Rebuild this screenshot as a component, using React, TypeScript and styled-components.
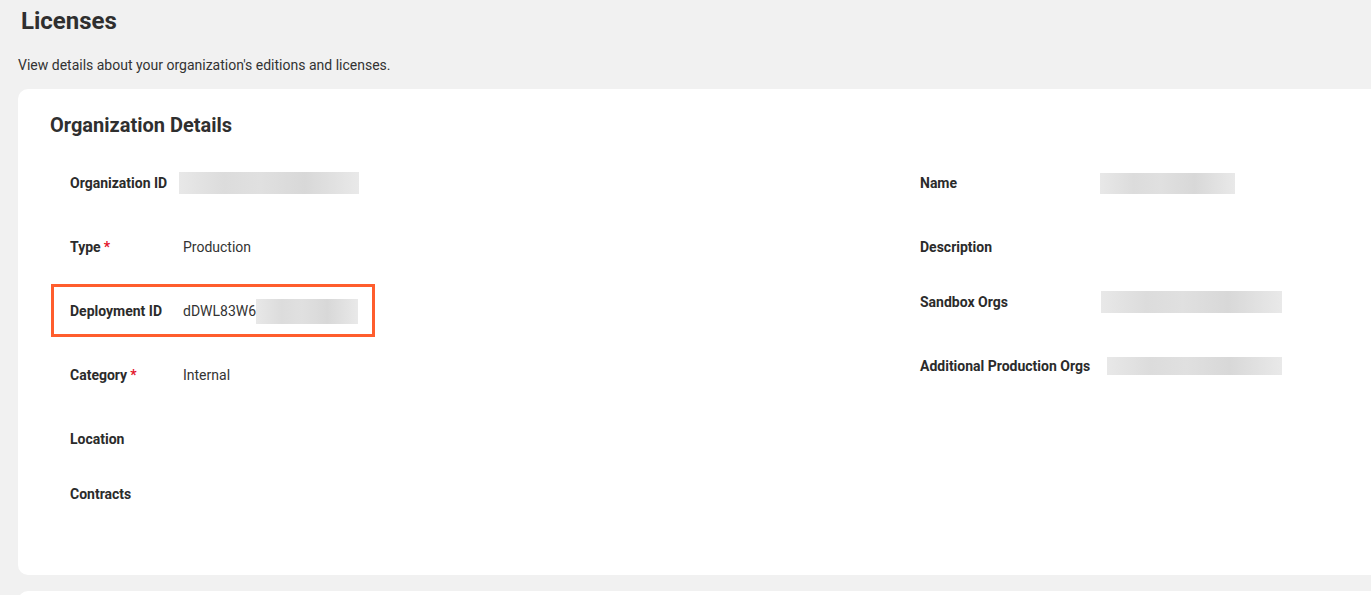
import { FC } from "react";
import styled, { createGlobalStyle } from "styled-components";

const GlobalStyle = createGlobalStyle`
	html, body {
		margin: 0;
		padding: 0;
		background: #f1f1f1;
		overflow: hidden;
	}
	body {
		font-family: Roboto, "Liberation Sans", Arial, sans-serif;
		color: #333;
	}
`;

const Page = styled.div`
	padding: 0 0 0 18px;
	width: 1371px;
	box-sizing: border-box;
`;

const Title = styled.h1`
	margin: 0 0 0 3px;
	font-size: 24px;
	line-height: 42px;
	font-weight: 700;
	color: #2f2f2f;
`;

const Subtitle = styled.p`
	margin: 14px 0 0;
	font-size: 14px;
	line-height: 18px;
	color: #333;
`;

const Card = styled.section<{ $tall?: number }>`
	margin: 15px -30px 0 0;
	background: #fff;
	border-radius: 10px;
	padding: 20px 0 65px 32px;
	min-height: ${(p) => p.$tall ?? 0}px;
	box-sizing: border-box;

	& + & {
		margin-top: 16px;
	}
`;

const CardTitle = styled.h2`
	margin: 0 0 26px;
	font-size: 20px;
	line-height: 32px;
	font-weight: 700;
	color: #2f2f2f;
`;

const Columns = styled.div`
	display: grid;
	grid-template-columns: 850px 1fr;
	padding-left: 20px;
`;

const Column = styled.div`
	display: flex;
	flex-direction: column;
`;

const Row = styled.div<{ $pitch?: number }>`
	position: relative;
	display: flex;
	align-items: center;
	height: 32px;
	margin-bottom: ${(p) => (p.$pitch ?? 32) - 32}px;
`;

const Label = styled.div<{ $width: number }>`
	width: ${(p) => p.$width}px;
	flex-shrink: 0;
	font-size: 14px;
	line-height: 20px;
	font-weight: 700;
	color: #2b2b2b;
`;

const Required = styled.span`
	color: #e3132b;
	margin-left: 3px;
`;

const Value = styled.div`
	display: flex;
	align-items: center;
	height: 32px;
	font-size: 14px;
	color: #333;
`;

const Redacted = styled.span<{ $w: number; $h: number; $shift?: number }>`
	display: inline-block;
	width: ${(p) => p.$w}px;
	height: ${(p) => p.$h}px;
	margin-left: ${(p) => p.$shift ?? 0}px;
	background: linear-gradient(
		90deg,
		#e8e8e8 0%,
		#dcdcdc 25%,
		#e0e0e0 45%,
		#d8d8d8 70%,
		#e9e9e9 100%
	);
`;

const Highlight = styled.div`
	position: absolute;
	left: -19px;
	top: -11px;
	width: 324px;
	height: 53px;
	border: 3px solid #ff5d2d;
	box-sizing: border-box;
	pointer-events: none;
`;

const LEFT = 113;
const RIGHT = 180;

const App: FC = () => {
	return (
		<>
			<GlobalStyle />
			<Page>
				<Title>Licenses</Title>
				<Subtitle>View details about your organization's editions and licenses.</Subtitle>
				<Card>
					<CardTitle>Organization Details</CardTitle>
					<Columns>
						<Column>
							<Row $pitch={64}>
								<Label $width={LEFT}>Organization ID</Label>
								<Value>
									<Redacted $w={180} $h={22} $shift={-4} />
								</Value>
							</Row>
							<Row $pitch={64}>
								<Label $width={LEFT}>
									Type<Required>*</Required>
								</Label>
								<Value>Production</Value>
							</Row>
							<Row $pitch={64}>
								<Highlight />
								<Label $width={LEFT}>Deployment ID</Label>
								<Value>
									dDWL83W6
									<Redacted $w={102} $h={25} />
								</Value>
							</Row>
							<Row $pitch={64}>
								<Label $width={LEFT}>
									Category<Required>*</Required>
								</Label>
								<Value>Internal</Value>
							</Row>
							<Row $pitch={55}>
								<Label $width={LEFT}>Location</Label>
							</Row>
							<Row>
								<Label $width={LEFT}>Contracts</Label>
							</Row>
						</Column>
						<Column>
							<Row $pitch={64}>
								<Label $width={RIGHT}>Name</Label>
								<Value>
									<Redacted $w={135} $h={21} />
								</Value>
							</Row>
							<Row $pitch={55}>
								<Label $width={RIGHT}>Description</Label>
							</Row>
							<Row $pitch={64}>
								<Label $width={RIGHT}>Sandbox Orgs</Label>
								<Value>
									<Redacted $w={181} $h={22} $shift={1} />
								</Value>
							</Row>
							<Row>
								<Label $width={RIGHT}>Additional Production Orgs</Label>
								<Value>
									<Redacted $w={175} $h={18} $shift={7} />
								</Value>
							</Row>
						</Column>
					</Columns>
				</Card>
				<Card $tall={120} />
			</Page>
		</>
	);
};

export default App;
